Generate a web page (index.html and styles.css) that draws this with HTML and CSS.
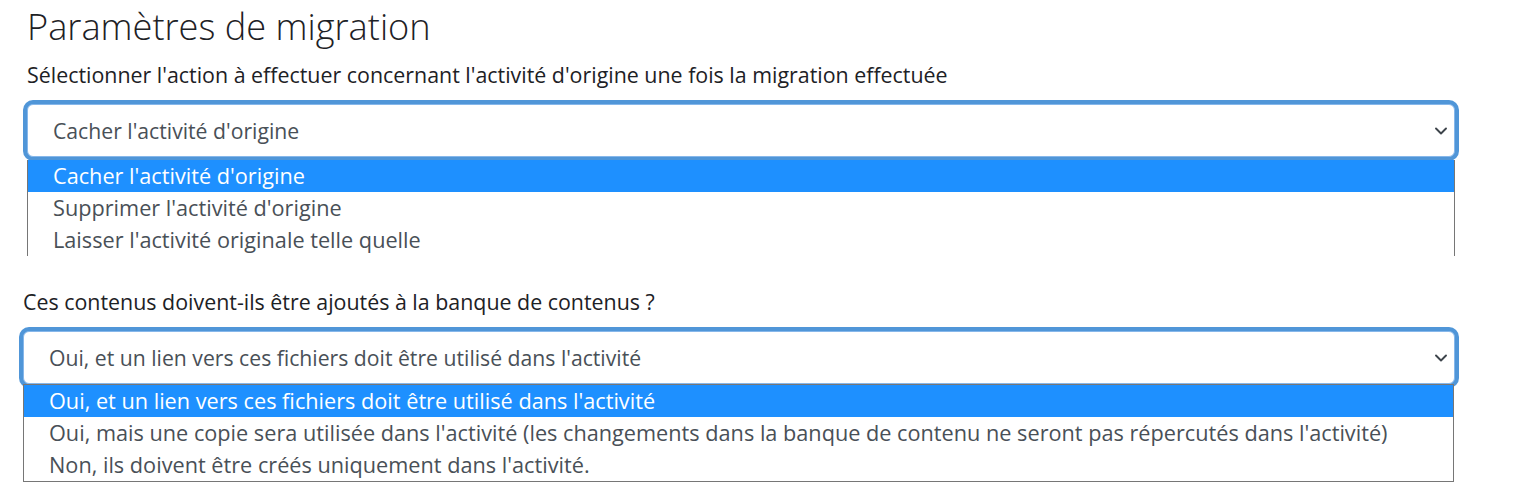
FILE: index.html
```html
<!doctype html>
<html lang="fr">
<head>
  <meta charset="utf-8" />
  <title>Paramètres de migration</title>
  <link rel="stylesheet" href="styles.css">
</head>
<body>
  <main class="page">
    <h2 class="title">Paramètres de migration</h2>

    <section class="field">
      <label class="field-label">Sélectionner l'action à effectuer concernant l'activité d'origine une fois la migration effectuée</label>
      <div class="select">
        <span class="select-value">Cacher l'activité d'origine</span>
        <svg class="chevron" viewBox="0 0 12 8" width="12" height="8"><path d="M1 1.5l5 5 5-5" fill="none" stroke="#3d444b" stroke-width="1.9" stroke-linecap="round" stroke-linejoin="round"/></svg>
      </div>
      <ul class="listbox listbox--cut">
        <li class="option is-active">Cacher l'activité d'origine</li>
        <li class="option">Supprimer l'activité d'origine</li>
        <li class="option">Laisser l'activité originale telle quelle</li>
      </ul>
    </section>

    <section class="field field--second">
      <label class="field-label">Ces contenus doivent-ils être ajoutés à la banque de contenus ?</label>
      <div class="select">
        <span class="select-value">Oui, et un lien vers ces fichiers doit être utilisé dans l'activité</span>
        <svg class="chevron" viewBox="0 0 12 8" width="12" height="8"><path d="M1 1.5l5 5 5-5" fill="none" stroke="#3d444b" stroke-width="1.9" stroke-linecap="round" stroke-linejoin="round"/></svg>
      </div>
      <ul class="listbox">
        <li class="option is-active">Oui, et un lien vers ces fichiers doit être utilisé dans l'activité</li>
        <li class="option">Oui, mais une copie sera utilisée dans l'activité (les changements dans la banque de contenu ne seront pas répercutés dans l'activité)</li>
        <li class="option">Non, ils doivent être créés uniquement dans l'activité.</li>
      </ul>
    </section>
  </main>
</body>
</html>
```
FILE: styles.css
```css
html, body { margin:0; padding:0; background:#fff; }
body { font-family:"Open Sans","Noto Sans",Arial,sans-serif; color:#1d2125; }

.page{ padding:0 0 0 27px; width:1428px; }

.title{
  margin:0; padding-top:2px;
  font-size:36.2px; font-weight:300; line-height:48px; color:#1d2125;
}

.field{ display:flex; flex-direction:column; }
.field-label{ font-size:21.4px; line-height:30px; margin-top:10px; margin-bottom:14px; color:#1d2125; }

.select{
  display:flex; align-items:center; justify-content:space-between;
  height:51px; padding:0 7px 0 25px;
  border:1px solid #86b7ea; border-radius:6px;
  box-shadow:0 0 0 4px #5096d8;
  background:#fff;
}
.select-value{ font-size:21.2px; color:#495057; }
.chevron{ width:12px; height:8px; }

.listbox{
  list-style:none; margin:3px 0 0 0; padding:0;
  border:1px solid #767676; border-top:0; border-bottom:0;
  position:relative; z-index:1; background:#fff;
}
.option{
  height:32px; line-height:32px; padding-left:25px;
  font-size:21.7px; color:#495057; white-space:nowrap;
}
.option.is-active{ background:#1e90ff; color:#fff; }

.field--second{ margin-left:-4px; margin-top:21px; }
.field--second .field-label{ margin-top:10px; }
.field--second .listbox{ border-top:1px solid #767676; border-bottom:1px solid #767676; margin:0 1px 0 0; }
```
